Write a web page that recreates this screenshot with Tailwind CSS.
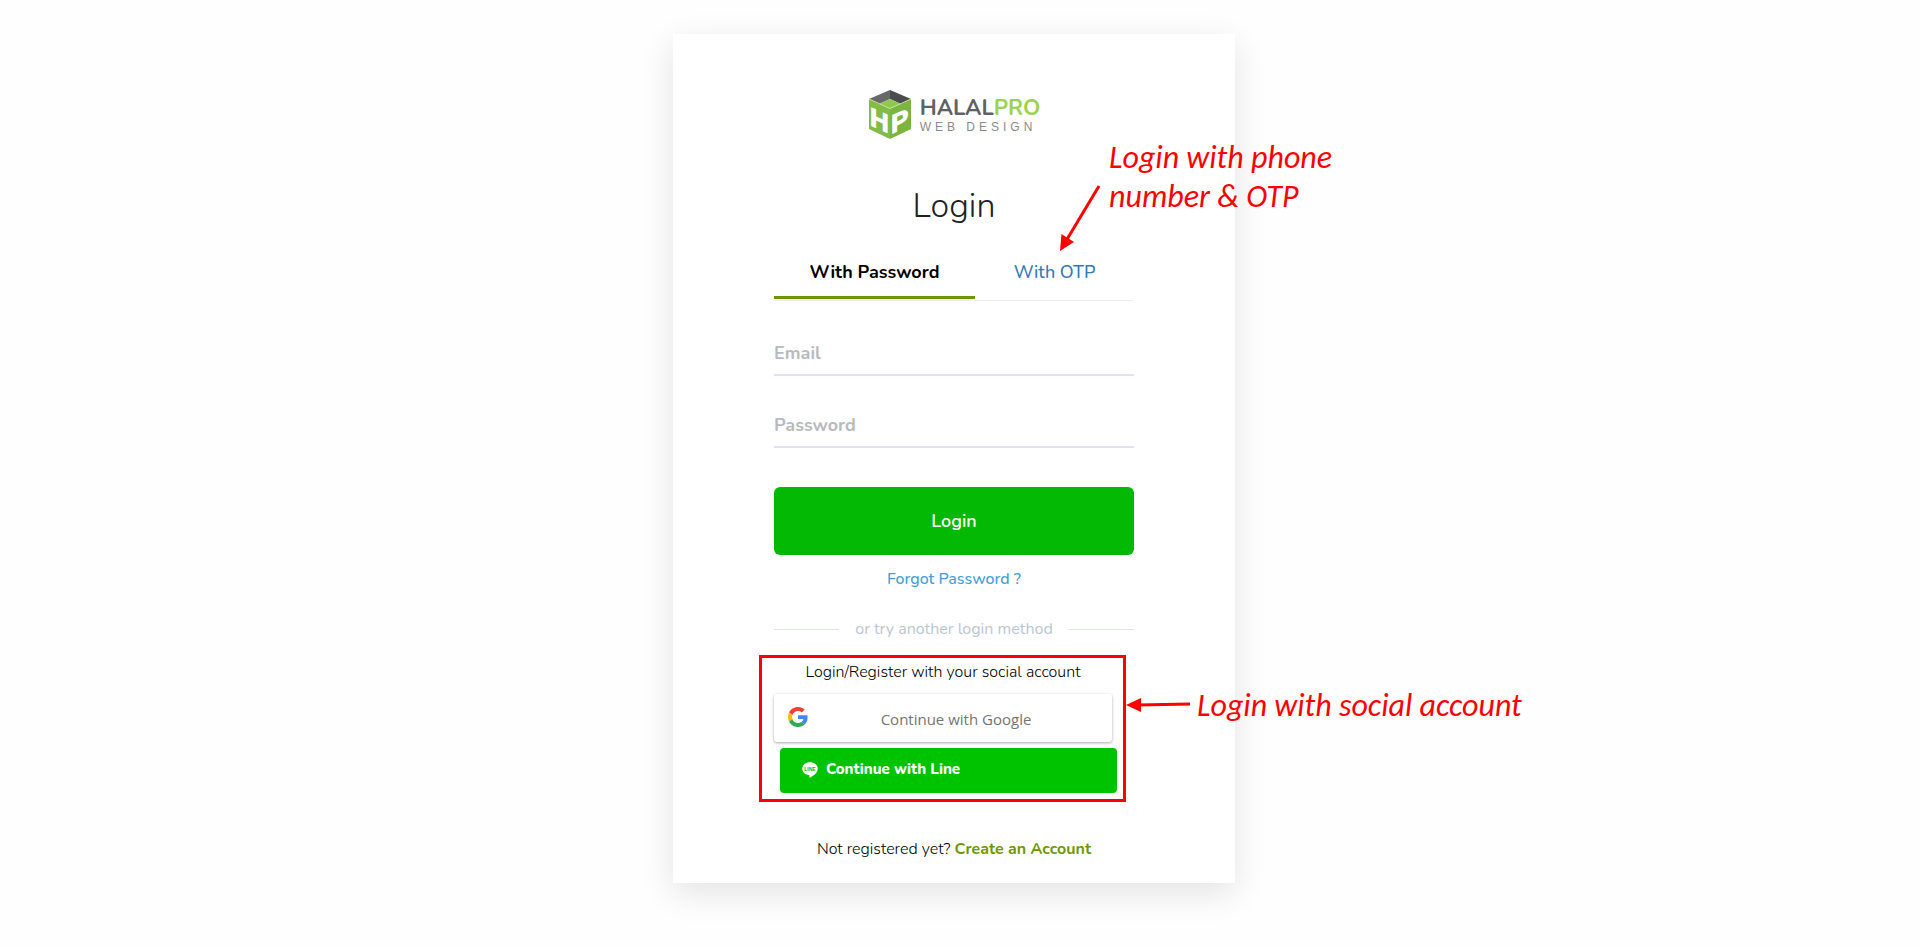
<!DOCTYPE html>
<html lang="en">

<head>
    <meta charset="UTF-8">
    <meta name="viewport" content="width=device-width, initial-scale=1.0">
    <title>Login - HalalPro Web Design</title>
    <script src="https://cdn.jsdelivr.net/npm/@tailwindcss/browser@4"></script>
</head>

<body class="bg-[#fefefe] min-h-screen pr-3 pt-[34px] pb-16 font-['Nunito','Open_Sans',sans-serif] text-[#212529]">

    <main class="relative mx-auto w-full max-w-[562px] bg-white px-[101px] pt-[54px] pb-[22px] shadow-[0_10px_32px_rgba(0,0,0,0.11)]">

        <!-- Logo -->
        <div class="flex items-center justify-center gap-2">
            <svg class="w-[44px] h-[52px]" viewBox="0 0 44 52" aria-hidden="true">
                <path d="M1 11 22 20.500V51L1 41z" fill="#83bb45" />
                <path d="M43 11 22 20.500V51l21-10z" fill="#7ab53f" />
                <path d="M22 2v9L11 16 1 11z" fill="#68696b" />
                <path d="M22 2v9l11 5 10-5z" fill="#4b4c4e" />
                <path d="M22 11l11 5-11 4.500L11 16z" fill="#8fc850" />
                <path d="M1 11 22 20.500 43 11" fill="none" stroke="#c5e59b" stroke-width="1" />
                <g font-family="Liberation Sans" font-weight="700" font-size="26" fill="#fff" stroke="#fff" stroke-width="1">
                    <text transform="translate(2 37) skewY(24)">H</text>
                    <text transform="translate(23 46) skewY(-24)">P</text>
                </g>
            </svg>
            <div class="pt-[2px]">
                <p class="text-[22px] leading-[24px] font-bold text-[#606163]">HALAL<span class="text-[#9bd24f]">PRO</span></p>
                <p class="font-['Liberation_Sans',sans-serif] text-[12px] leading-[14px] tracking-[4px] text-[#8a8b8d] whitespace-nowrap">WEB DESIGN</p>
            </div>
        </div>

        <h1 class="mt-[42px] text-center text-[34px] leading-[48px] font-light text-[#222]">Login</h1>

        <!-- Tabs -->
        <div class="mt-[18px] flex border-b border-[#eee]">
            <button type="button" class="mb-px w-[201px] border-b-3 border-[#6e9600] py-[11px] text-[18px] leading-[26px] font-bold text-black whitespace-nowrap">With Password</button>
            <button type="button" class="mb-1 grow py-[11px] text-[18px] leading-[26px] font-medium text-[#337ab7] whitespace-nowrap">With OTP</button>
        </div>

        <form>
            <input type="email" aria-label="Email" placeholder="Email"
                class="mt-7 block h-[47px] w-full border-b-2 border-[#dfe3ee] bg-transparent pt-[2px] text-[18px] font-bold outline-none placeholder:text-[#b8babd]">
            <input type="password" aria-label="Password" placeholder="Password"
                class="mt-[25px] block h-[47px] w-full border-b-2 border-[#dfe3ee] bg-transparent pt-[2px] text-[18px] font-bold outline-none placeholder:text-[#b8babd]">
            <button type="submit" class="mt-[39px] block h-[68px] w-full rounded-md bg-[#04b904] text-[18px] font-semibold text-white">Login</button>
        </form>

        <div class="mt-3 text-center leading-6">
            <a href="#" class="text-[16px] font-medium text-[#439fd8]">Forgot Password ?</a>
        </div>

        <div class="mt-[26px] flex items-center justify-between gap-4 text-[16px] leading-6 text-[#bcc6d2]">
            <span class="h-px grow bg-[#dfe3ee]"></span>
            <span>or try another login method</span>
            <span class="h-px grow bg-[#dfe3ee]"></span>
        </div>

        <!-- Social login -->
        <section class="relative mt-[19px] w-[338px]">
            <p class="text-center text-[16px] leading-6 font-light text-black">Login/Register with your social account</p>
            <button type="button" class="mt-[10px] flex h-12 w-full items-center rounded-[3px] bg-white pl-[14px] font-['Open_Sans',sans-serif] text-[15px] text-[#757575] shadow-[0_1px_3px_rgba(0,0,0,0.35)]">
                <svg class="mb-[2px] h-5 w-5" viewBox="0 0 48 48" aria-hidden="true">
                    <path fill="#EA4335" d="M24 9.500c3.540 0 6.710 1.220 9.210 3.600l6.850-6.850C35.900 2.380 30.470 0 24 0 14.620 0 6.510 5.380 2.560 13.220l7.980 6.190C12.430 13.720 17.740 9.500 24 9.500z" />
                    <path fill="#4285F4" d="M46.980 24.550c0-1.570-.15-3.090-.38-4.550H24v9.020h12.940c-.58 2.960-2.260 5.480-4.780 7.180l7.730 6c4.510-4.180 7.090-10.360 7.090-17.650z" />
                    <path fill="#FBBC05" d="M10.530 28.590c-.48-1.450-.76-2.990-.76-4.590s.27-3.140.76-4.590l-7.980-6.190C.92 16.460 0 20.120 0 24c0 3.880.92 7.540 2.560 10.780l7.970-6.190z" />
                    <path fill="#34A853" d="M24 48c6.480 0 11.930-2.130 15.890-5.810l-7.730-6c-2.150 1.450-4.920 2.300-8.160 2.300-6.260 0-11.570-4.220-13.470-9.910l-7.980 6.190C6.510 42.620 14.620 48 24 48z" />
                </svg>
                <span class="grow pr-2 pt-[2px] text-center">Continue with Google</span>
            </button>
            <button type="button" class="mt-[6px] ml-[6px] flex h-[45px] w-[337px] items-center gap-2 rounded-[4px] bg-[#00c300] pb-[2px] pl-[22px] text-[15px] font-extrabold text-white">
                <svg class="h-4 w-4" viewBox="0 0 16 16" aria-hidden="true">
                    <path d="M8 .3C3.700.3.200 3.100.200 6.700c0 3.200 2.800 5.800 6.500 6.300.900.200.800.500.600 2.200 0 .300.200.600.900.200C9 15 15.800 11.300 15.800 6.700 15.800 3.100 12.300.3 8 .3z" fill="#fff" />
                    <text x="8" y="8.500" text-anchor="middle" font-family="Liberation Sans" font-weight="700" font-size="5" fill="#00c300">LINE</text>
                </svg>
                Continue with Line
            </button>
            <div class="pointer-events-none absolute -top-[5px] -left-[15px] h-[147px] w-[367px] border-3 border-[#f00]"></div>
        </section>

        <p class="mt-11 text-center text-[16px] leading-6 font-light text-black whitespace-nowrap">Not registered yet?
            <a href="#" class="font-bold text-[#6e9600]">Create an Account</a>
        </p>

        <!-- Callouts -->
        <p class="absolute top-[104px] left-[436px] w-[260px] font-['Calibri','Carlito','Lato',sans-serif] text-[32px] leading-[39px] text-[#f00] italic">Login with phone number &amp; OTP</p>
        <svg class="absolute top-[146px] left-[382px] h-[76px] w-[50px]" viewBox="0 0 50 76" aria-hidden="true">
            <path d="M44 6 11 61" stroke="#f00" stroke-width="3" />
            <path d="M5 71 6.500 54 19 62z" fill="#f00" />
        </svg>
        <p class="absolute top-[652px] left-[524px] font-['Calibri','Carlito','Lato',sans-serif] text-[32px] leading-[39px] text-[#f00] italic whitespace-nowrap">Login with social account</p>
        <svg class="absolute top-[661px] left-[453px] h-5 w-16" viewBox="0 0 64 20" aria-hidden="true">
            <path d="M12 10 64 9" stroke="#f00" stroke-width="3" />
            <path d="M0 10 15 3v14z" fill="#f00" />
        </svg>
    </main>

</body>

</html>
